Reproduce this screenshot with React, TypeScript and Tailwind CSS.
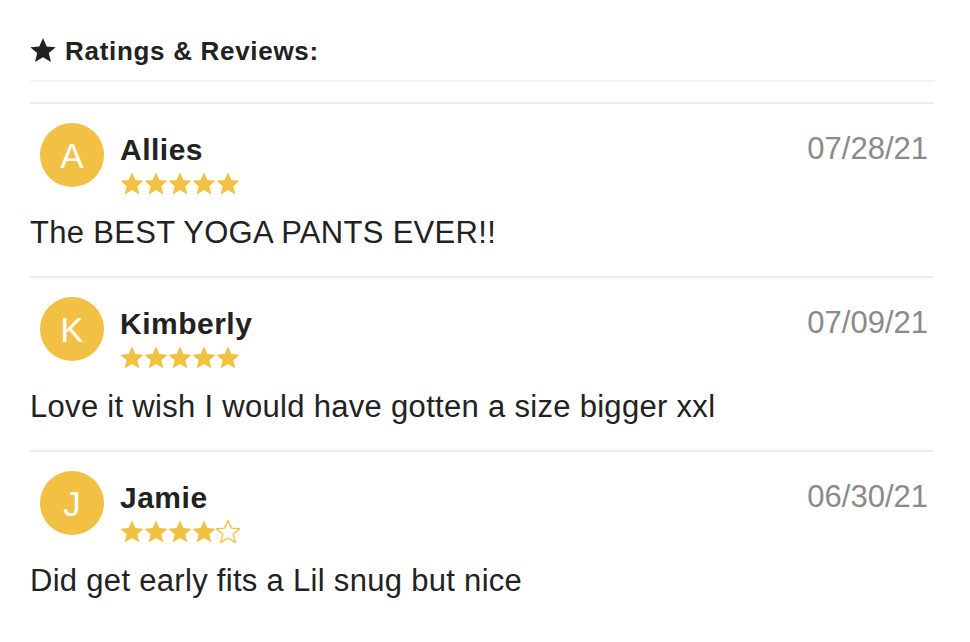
import React from 'react';

interface Review {
  name: string;
  date: string;
  rating: number;
  text: string;
}

const reviews: Review[] = [
  { name: 'Allies', date: '07/28/21', rating: 5, text: 'The BEST YOGA PANTS EVER!!' },
  { name: 'Kimberly', date: '07/09/21', rating: 5, text: 'Love it wish I would have gotten a size bigger xxl' },
  { name: 'Jamie', date: '06/30/21', rating: 4, text: 'Did get early fits a Lil snug but nice' },
];

const STAR = 'M12 1.6l3.1 7.1 7.6.6-5.8 5 1.8 7.5L12 17.8l-6.7 4 1.8-7.5-5.8-5 7.6-.6z';

const Star = ({ filled }: { filled: boolean }) => (
  <svg viewBox="1 1.3 22 21" className="h-[23px] w-[24px]">
    <path
      d={STAR}
      fill={filled ? '#f2c144' : 'none'}
      stroke="#f2c144"
      strokeWidth={filled ? 0 : 1.2}
      strokeLinejoin="round"
    />
  </svg>
);

const App: React.FC = () => {
  return (
    <div className="min-h-screen bg-white pl-[30px] pr-[36px] pt-[22px] font-['Liberation_Sans',Arial,sans-serif] text-[#222]">
      {/* Header */}
      <div className="flex h-[60px] items-center gap-[9px] border-b-2 border-[#f3f3f3]">
        <svg viewBox="1.3 1.6 21.4 20.2" className="mb-[2px] h-[24px] w-[26px]">
          <path d={STAR} fill="#222" />
        </svg>
        <h2 className="text-[26px] font-bold leading-none tracking-[0.7px]">Ratings &amp; Reviews:</h2>
      </div>

      <div className="mt-[20px] border-t-2 border-[#ececec]">
        {reviews.map((r, i) => (
          <div
            key={r.name}
            className={`pt-[19px] pb-[25px] ${i < reviews.length - 1 ? 'border-b-2 border-[#ececec]' : ''}`}
          >
            <div className="flex items-start pl-[10px]">
              <div className="flex h-[64px] w-[64px] shrink-0 items-center justify-center rounded-full bg-[#f2c144] pt-[2px] text-[35px] text-white">
                {r.name[0]}
              </div>
              <div className="ml-[16px] mt-[10px] flex-1">
                <div className="text-[30px] font-bold leading-[34px] tracking-[0.5px]">{r.name}</div>
                <div className="mt-[5px] flex">
                  {Array.from({ length: 5 }).map((_, s) => (
                    <Star key={s} filled={s < r.rating} />
                  ))}
                </div>
              </div>
              <div className="mt-[8px] pr-[6px] text-[31px] leading-[36px] text-[#8a8a8a]">{r.date}</div>
            </div>
            <p className="mt-[20px] text-[31px] leading-[36px] tracking-[0.3px]">{r.text}</p>
          </div>
        ))}
      </div>
    </div>
  );
};

export default App;
